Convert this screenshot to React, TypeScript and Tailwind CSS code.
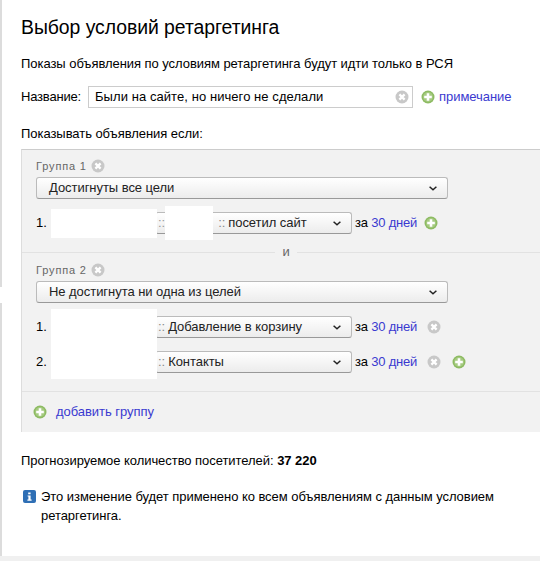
import React from "react";

const Plus = () => (
  <svg width="14" height="14" viewBox="0 0 14 14" className="shrink-0">
    <circle cx="7" cy="7" r="6.5" fill="#8dbb62" />
    <circle cx="7" cy="7" r="5" fill="#a5ca80" />
    <path d="M7 3.2v7.6M3.2 7h7.6" stroke="#fff" strokeWidth="2.6" />
  </svg>
);

const Cross = () => (
  <svg width="14" height="14" viewBox="0 0 14 14" className="shrink-0">
    <circle cx="7" cy="7" r="6.5" fill="#c8c8c8" />
    <path d="M4.4 4.4l5.2 5.2M9.6 4.4l-5.2 5.2" stroke="#fff" strokeWidth="2.3" />
  </svg>
);

const Chevron = () => (
  <svg width="8" height="5" viewBox="0 0 8 5" className="shrink-0">
    <path d="M.6.8L4 3.8 7.4.8" fill="none" stroke="#222" strokeWidth="1.5" />
  </svg>
);

const Info = () => (
  <svg width="13" height="13" viewBox="0 0 13 13" className="shrink-0">
    <rect width="13" height="13" rx="2" fill="#2f6fb5" />
    <path d="M5.2 2.4h2.4v1.8H5.2zM4.6 5.4h3v4.2h1v1.2H4.4V9.6h1V6.6h-.8z" fill="#fff" />
  </svg>
);

const Select = ({ width, height = 22, children }: { width: number; height?: number; children: React.ReactNode }) => (
  <div
    className="relative flex items-center justify-between shrink-0 pr-[10px] pl-[1px] rounded-[3px] border border-[#bbb] border-b-[#999] bg-gradient-to-b from-white to-[#ececec] text-[13px] text-[#222]"
    style={{ width, height }}
  >
    <span className="flex items-center whitespace-nowrap">{children}</span>
    <Chevron />
  </div>
);

const Days = () => (
  <span className="ml-[3px] whitespace-nowrap text-[13px] text-black tracking-[-0.2px]">
    за <span className="text-[#3a3ad0]">30 дней</span>
  </span>
);

export default function App() {
  return (
    <div
      className="w-[540px] h-[561px] overflow-hidden bg-white text-[13px] text-black flex flex-col relative tracking-[-0.05px]"
      style={{ fontFamily: '"Liberation Sans", Arial, sans-serif' }}
    >
      <div className="h-[556px] border-l-2 border-[#dcdcdc] pl-[19px] flex flex-col">
        <h1 className="mt-[15px] h-[24px] leading-[24px] text-[19.4px] whitespace-nowrap">Выбор условий ретаргетинга</h1>
        <p className="mt-[16px] h-[18px] leading-[18px] whitespace-nowrap">
          Показы объявления по условиям ретаргетинга будут идти только в РСЯ
        </p>
        <div className="mt-[13px] h-[22px] flex items-center">
          <span className="w-[67px] tracking-[-0.2px]">Название:</span>
          <div className="w-[325px] h-[22px] border border-[#ccc] flex items-center justify-between pl-[6px] pr-[3px] text-[13px] tracking-[0.07px]">
            <span className="whitespace-nowrap">Были на сайте, но ничего не сделали</span>
            <Cross />
          </div>
          <span className="ml-[8px]"><Plus /></span>
          <span className="ml-[4px] text-[#3a3ad0]">примечание</span>
        </div>
        <p className="mt-[17px] h-[18px] leading-[18px]">Показывать объявления если:</p>

        <div className="mt-[6px] h-[283px] border-t border-l border-t-[#ccc] border-l-[#ddd] bg-[#f2f2f2] flex flex-col">
          <div className="pl-[14px] pt-[8px] h-[102px] shrink-0">
            <div className="flex items-center h-[16px] text-[11px] text-[#666] tracking-[0.85px]">
              Группа 1
              <span className="ml-[4px]"><Cross /></span>
            </div>
            <div className="mt-[3px]">
              <Select width={412}><span className="pl-[11px]">Достигнуты все цели</span></Select>
            </div>
            <div className="mt-[13px] flex items-center h-[22px]">
              <span className="w-[15px]">1.</span>
              <div className="w-[106px] h-[29px] mr-[-2px] bg-white shrink-0 relative z-10" />
              <div className="relative">
                <Select width={197}>
                  <span className="pl-[1px] text-[#999]">::</span>
                  <span className="w-[53px]" />
                  <span className="text-[#888]">::</span>
                  <span className="ml-[3px]">посетил сайт</span>
                </Select>
                <div className="absolute left-[10px] top-[-6px] w-[48px] h-[34px] bg-white" />
              </div>
              <Days />
              <span className="ml-[7px]"><Plus /></span>
            </div>
          </div>

          <div className="h-[1px] shrink-0 bg-[#e2e2e2] relative">
            <span className="absolute left-[253px] top-[-9px] w-[22px] h-[18px] leading-[18px] text-center bg-[#f2f2f2] text-[#666]">и</span>
          </div>

          <div className="pl-[14px] pt-[9px] h-[138px] shrink-0 relative">
            <div className="flex items-center h-[16px] text-[11px] text-[#666] tracking-[0.85px]">
              Группа 2
              <span className="ml-[4px]"><Cross /></span>
            </div>
            <div className="mt-[3px]">
              <Select width={412}><span className="pl-[11px]">Не достигнута ни одна из целей</span></Select>
            </div>
            <div className="mt-[13px] flex items-center h-[22px]">
              <span className="w-[119px]">1.</span>
              <Select width={197}>
                <span className="pl-[1px] text-[#888]">::</span>
                <span className="ml-[3px]">Добавление в корзину</span>
              </Select>
              <Days />
              <span className="ml-[10px]"><Cross /></span>
            </div>
            <div className="mt-[13px] flex items-center h-[22px]">
              <span className="w-[119px]">2.</span>
              <Select width={197}>
                <span className="pl-[1px] text-[#888]">::</span>
                <span className="ml-[3px]">Контакты</span>
              </Select>
              <Days />
              <span className="ml-[10px]"><Cross /></span>
              <span className="ml-[11px]"><Plus /></span>
            </div>
            <div className="absolute left-[29px] top-[56px] w-[106px] h-[70px] bg-white" />
          </div>

          <div className="h-[1px] shrink-0 bg-[#e2e2e2]" />
          <div className="flex-1 flex items-center pl-[11px] pb-[1px]">
            <Plus />
            <span className="ml-[9px] text-[13px] text-[#3a3ad0]">добавить группу</span>
          </div>
        </div>

        <p className="mt-[19px] h-[18px] leading-[18px] whitespace-nowrap pt-[1px]">
          Прогнозируемое количество посетителей: <b>37 220</b>
        </p>
        <div className="mt-[18px] flex items-start pl-[2px]">
          <span className="mt-[3px]"><Info /></span>
          <p className="ml-[5px] w-[480px] leading-[19px]">
            Это изменение будет применено ко всем объявлениям с данным условием ретаргетинга.
          </p>
        </div>
      </div>
      <div className="h-[5px] bg-[#f0f0f0]" />
      <div className="absolute left-0 top-[287px] w-[21px] h-[16px] bg-white" />
    </div>
  );
}
